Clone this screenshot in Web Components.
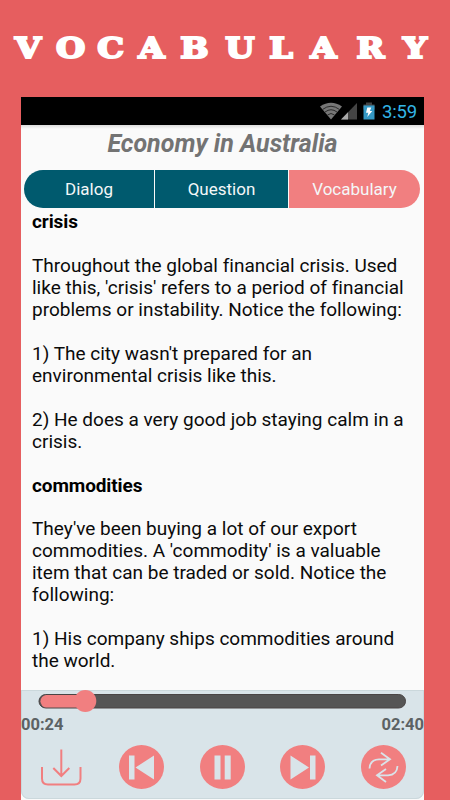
<!DOCTYPE html>
<html lang="en"><head><meta charset="utf-8"><title>Vocabulary</title>
<style>html,body{margin:0;background:#e65e5f;font-family:Roboto,"Liberation Sans",sans-serif;font-variant-ligatures:none}</style></head>
<body><vocab-page></vocab-page>
<script>
const define=(name,html)=>customElements.define(name,class extends HTMLElement{
  constructor(){super();this.attachShadow({mode:'open'}).innerHTML=html}
});
define('page-banner',`<style>:host{display:block;height:97px}svg{display:block}text{font:bold 27.500px "DejaVu Serif",serif;fill:#fff;stroke:#fff;stroke-width:2;text-anchor:middle}</style>
<svg width="450" height="97"><text transform="scale(1.22 1)" y="58" x="23 57.8 90.6 124.2 159.4 196.7 230.3 265.2 303.7 340.2">VOCABULARY</text></svg>`);
define('status-bar',`<style>:host{display:flex;height:28px;background:#000;align-items:center;justify-content:flex-end;box-sizing:border-box;padding-right:7px}
span{font-size:18.500px;line-height:28px;color:#33b5e5;margin-left:5px;padding-top:2px;letter-spacing:-.15px}svg{display:block}</style>
<svg width="57" height="28" viewBox="320 97 57 28"><path d="M320 106.500Q331 99 342 106.500L331 119.500Z" fill="#777"/><g fill="none" stroke="#2b2b2b" stroke-width="1"><path d="M322.500 109.500Q331 103 339.500 109.500M325 112Q331 107.500 337 112M327.500 115Q331 112 334.500 115"/></g>
<path d="M357 103V119.500H341Z" fill="#444"/><path d="M348 112.300V119.500H341Z" fill="#aaa"/>
<path d="M366 102.500h6v2h2.500v5h-11v-5h2.500Z" fill="#444"/><path d="M363.500 105.500h11v14h-11Z" fill="#3498c4"/><path d="M367.300 107.500h4l-1.400 3.500h2.400l-5 6 1-4.300h-2.300Z" fill="#fff"/></svg><span>3:59</span>`);
define('lesson-title',`<style>:host{display:block;height:45px;text-align:center;font:italic bold 25px/37px Roboto,sans-serif;color:#737373;background:linear-gradient(#dcdcdc,#fafafa 4px);white-space:nowrap}</style><slot></slot>`);
define('tab-item',`<style>:host{display:grid;place-items:center;background:#005a6e;color:#f4f7f8;font-size:17px;height:38px}:host([first]){border-radius:19px 0 0 19px}:host([active]){background:#f17f80;border-radius:0 19px 19px 0}</style><slot></slot>`);
define('tab-strip',`<style>:host{display:grid;grid-template-columns:130px 133px 131px;gap:1px;margin:0 3px;height:38px}</style><slot></slot>`);
define('lesson-text',`<style>:host{display:block;height:482px;box-sizing:border-box;padding:3.200px 0 0 11px;font-size:19px;line-height:21.950px;color:#0b0b0b;white-space:nowrap}p{margin:0 0 21.950px}b{color:#000;letter-spacing:-.1px}</style>
<p><b>crisis</b></p><p>Throughout the global financial crisis. Used<br>like this, 'crisis' refers to a period of financial<br>problems or instability. Notice the following:</p><p>1) The city wasn't prepared for an<br>environmental crisis like this.</p><p>2) He does a very good job staying calm in a<br>crisis.</p><p><b>commodities</b></p><p>They've been buying a lot of our export<br>commodities. A 'commodity' is a valuable<br>item that can be traded or sold. Notice the<br>following:</p><p>1) His company ships commodities around<br>the world.</p>`);
define('seek-bar',`<style>:host{display:block;height:24px}svg{display:block}</style><svg width="403" height="24" viewBox="21 690 403 24"><rect x="39" y="694.500" width="366.500" height="13.500" rx="6.700" fill="#555" stroke="#4a4545"/><path d="M85 695H46a6.300 6.300 0 0 0 0 12.500H85Z" fill="#f17f80"/><circle cx="85.300" cy="701" r="11" fill="#f17f80"/></svg>`);
define('time-row',`<style>:host{display:flex;justify-content:space-between;height:20px;font:bold 16.500px/21px Roboto,sans-serif;color:#5c6264}</style><span>00:24</span><span>02:40</span>`);
define('icon-button',`<style>:host{display:block;width:45px;height:44px}:host([filled]){background:#f17f80;border-radius:50%}::slotted(svg){display:block}</style><slot></slot>`);
define('player-panel',`<style>:host{display:block;height:109px;box-sizing:border-box;background:#d9e4e9;box-shadow:inset 0 0 0 1px #cbd8dc;border-radius:0 0 8px 8px}
nav{display:grid;grid-template-columns:45px 45px 45px 45px 45px;column-gap:35.600px;padding:11px 0 0 17.600px}svg{display:block;overflow:visible}</style>
<seek-bar></seek-bar><time-row></time-row><nav>
<icon-button><svg width="45" height="44" fill="none" stroke="#f17f80" stroke-width="2"><path d="M3 22V33.500Q3 39.500 9 39.500H35.500Q41.500 39.500 41.500 33.500V22M22.300 4.500V31M14.300 23L22.300 31L30.300 23"/></svg></icon-button>
<icon-button filled><svg width="45" height="44" fill="#d9e4e9"><path d="M10 10.500h5.500v24H10ZM16.500 22.500L35 10.500v24Z"/></svg></icon-button>
<icon-button filled><svg width="45" height="44" fill="#d9e4e9"><path d="M14.500 10.500h6v24h-6ZM24.700 10.500h6v24h-6Z"/></svg></icon-button>
<icon-button filled><svg width="45" height="44" fill="#d9e4e9"><path d="M10.500 10.500L29 22.500L10.500 34.500ZM30 10.500h5.500v24H30Z"/></svg></icon-button>
<icon-button filled><svg width="45" height="44" fill="none" stroke="#d9e4e9" stroke-width="1.800"><path d="M8.500 23.500Q9 14.500 18 14.300H29M20 7.700L29 14.300L20 20.500M36.500 21Q36 30 27 30.300H16M25 24L16 30.300L25 37"/></svg></icon-button></nav>`);
define('vocab-page',`<style>:host{display:block;width:450px;height:800px;overflow:hidden;background:#e65e5f}main{width:403px;height:703px;margin-left:21px;background:#fafafa}</style>
<page-banner></page-banner><main><status-bar></status-bar><lesson-title>Economy in Australia</lesson-title><tab-strip><tab-item first>Dialog</tab-item><tab-item>Question</tab-item><tab-item active>Vocabulary</tab-item></tab-strip><lesson-text></lesson-text><player-panel></player-panel></main>`);
</script></body></html>
